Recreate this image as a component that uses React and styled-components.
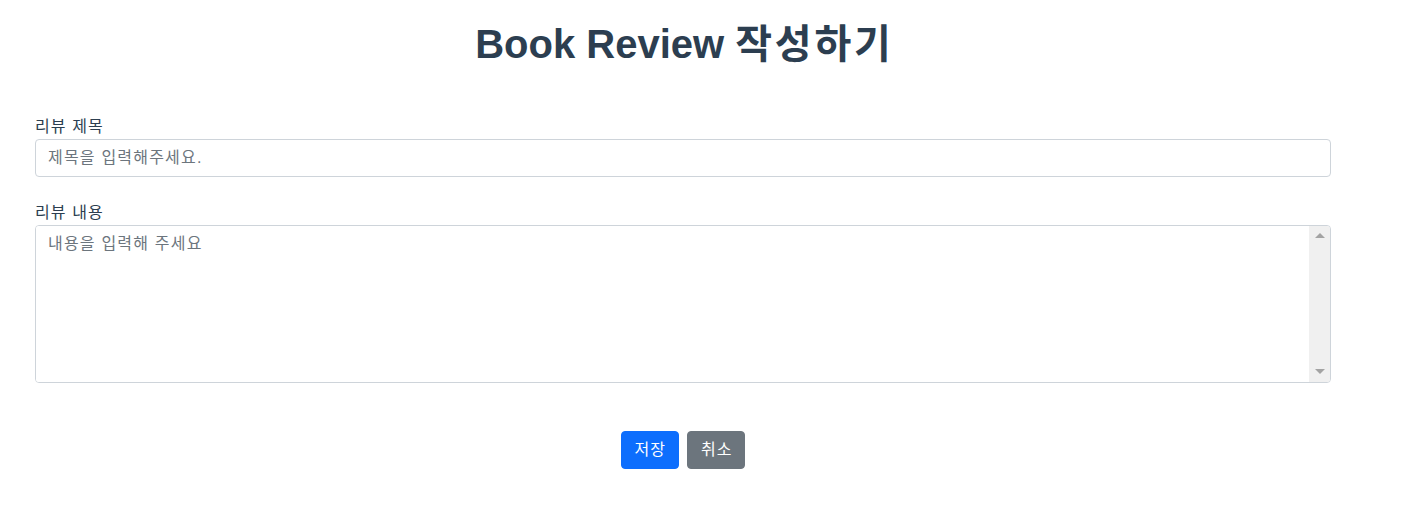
import React, { useState } from 'react';
import styled, { createGlobalStyle } from 'styled-components';

const GlobalStyle = createGlobalStyle`
  html, body {
    margin: 0;
    padding: 0;
    background: #fff;
  }
  body {
    font-family: 'Liberation Sans', Arial, 'Noto Sans CJK KR', sans-serif;
    color: #2c3e50;
    -webkit-font-smoothing: antialiased;
  }
  * {
    box-sizing: border-box;
  }
`;

const Page = styled.div`
  width: 1296px;
  margin-left: 35px;
  padding-top: 20px;
  padding-bottom: 60px;
`;

const Title = styled.h1`
  margin: 0 0 47px;
  font-size: 40px;
  line-height: 48px;
  font-weight: 700;
  text-align: center;
  color: #2c3e50;
`;

// hangul part of the heading, spaced out a little
const Hangul = styled.span`
  letter-spacing: 2.8px;
  margin-right: -2.8px;
`;

const Field = styled.div`
  display: flex;
  flex-direction: column;
  margin-bottom: ${(p) => p.$gap ?? 24}px;
`;

const Label = styled.label`
  font-size: 16px;
  line-height: 24px;
  letter-spacing: 1.1px;
  color: #2c3e50;
`;

const Input = styled.input`
  display: block;
  width: 100%;
  height: 38px;
  padding: 6px 12px;
  font-family: inherit;
  font-size: 16px;
  line-height: 24px;
  letter-spacing: 1.2px;
  color: #212529;
  border: 1px solid #ced4da;
  border-radius: 4px;
  outline: none;
  &::placeholder {
    color: #6c757d;
  }
`;

const AreaBox = styled.div`
  display: flex;
  height: 158px;
  border: 1px solid #ced4da;
  border-radius: 4px;
  overflow: hidden;
`;

const TextArea = styled.textarea`
  flex: 1;
  padding: 6px 12px;
  border: none;
  resize: none;
  outline: none;
  font-family: inherit;
  font-size: 16px;
  line-height: 24px;
  letter-spacing: 1.2px;
  color: #212529;
  overflow: hidden;
  &::placeholder {
    color: #6c757d;
  }
`;

const ScrollTrack = styled.div`
  width: 21px;
  background: #f0f0f0;
  display: flex;
  flex-direction: column;
  justify-content: space-between;
  align-items: center;
  padding: 7px 0 8px;
`;

const Arrow = styled.span`
  width: 0;
  height: 0;
  border-left: 5px solid transparent;
  border-right: 5px solid transparent;
  ${(p) =>
    p.$down
      ? 'border-top: 5px solid #a3a3a3;'
      : 'border-bottom: 5px solid #a3a3a3;'}
`;

const Actions = styled.div`
  display: flex;
  justify-content: center;
  gap: 8px;
  margin-top: 48px;
`;

const Button = styled.button`
  height: 38px;
  padding: 6px 12px;
  font-family: inherit;
  font-size: 16px;
  line-height: 24px;
  letter-spacing: 1px;
  text-indent: 1px;
  color: #fff;
  background: ${(p) => (p.$variant === 'secondary' ? '#6c757d' : '#0d6efd')};
  border: 1px solid ${(p) => (p.$variant === 'secondary' ? '#6c757d' : '#0d6efd')};
  border-radius: 4px;
  cursor: pointer;
`;

export default function App() {
  const [title, setTitle] = useState('');
  const [content, setContent] = useState('');

  return (
    <>
      <GlobalStyle />
      <Page>
        <Title>
          Book Review <Hangul>작성하기</Hangul>
        </Title>
        <Field>
          <Label htmlFor="title">리뷰 제목</Label>
          <Input
            id="title"
            placeholder="제목을 입력해주세요."
            value={title}
            onChange={(e) => setTitle(e.target.value)}
          />
        </Field>
        <Field $gap={0}>
          <Label htmlFor="content">리뷰 내용</Label>
          <AreaBox>
            <TextArea
              id="content"
              placeholder="내용을 입력해 주세요"
              value={content}
              onChange={(e) => setContent(e.target.value)}
            />
            <ScrollTrack>
              <Arrow />
              <Arrow $down />
            </ScrollTrack>
          </AreaBox>
        </Field>
        <Actions>
          <Button type="button">저장</Button>
          <Button type="button" $variant="secondary">
            취소
          </Button>
        </Actions>
      </Page>
    </>
  );
}
